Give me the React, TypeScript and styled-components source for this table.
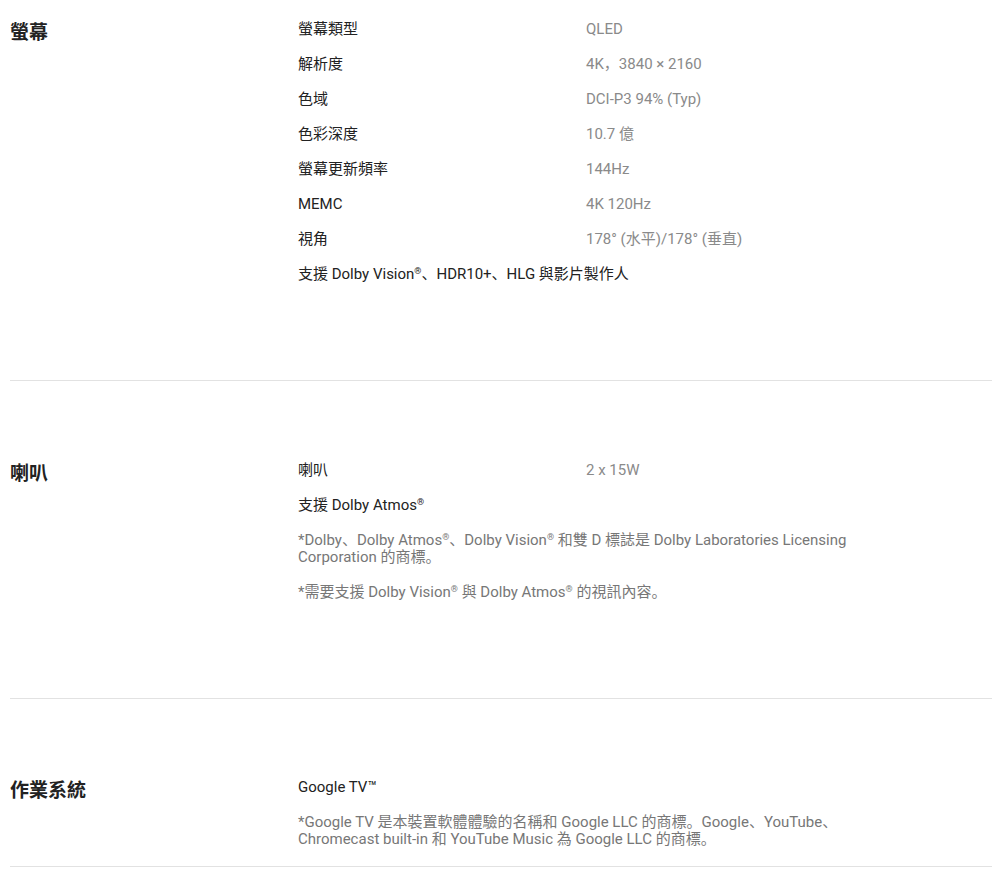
import styled, { createGlobalStyle } from "styled-components";
import { Fragment } from "react";

const Global = createGlobalStyle`
  body {
    margin: 0;
    background: #fff;
    font-family: Roboto, "Noto Sans CJK SC", sans-serif;
    color: #222;
  }
`;

const Page = styled.div`
  width: 982px;
  padding-left: 10px;
`;

const Section = styled.section<{ $top: number; $bottom: number }>`
  display: grid;
  grid-template-columns: 288px 1fr;
  padding: ${({ $top }) => $top}px 0 ${({ $bottom }) => $bottom}px;
  border-bottom: 1px solid #e2e2e2;
`;

const Title = styled.h2`
  margin: 0;
  font-size: 19px;
  font-weight: 700;
  line-height: 42px;
  color: #222;
`;

const Body = styled.div`
  display: flex;
  flex-direction: column;
`;

const Row = styled.div`
  display: flex;
  font-size: 15px;
  line-height: 35px;
`;

const Key = styled.div<{ $wide?: boolean }>`
  width: ${({ $wide }) => ($wide ? "auto" : "288px")};
  flex-shrink: 0;
  color: #222;
`;

const Value = styled.div`
  color: #8a8a8a;
`;

const Note = styled.p<{ $gap: number }>`
  margin: ${({ $gap }) => $gap}px 0 0;
  max-width: 600px;
  font-size: 15px;
  line-height: 17px;
  color: #777;
`;

const Sup = styled.sup`
  font-size: 0.6em;
  line-height: 0;
  vertical-align: 0.6em;
`;

// render ® as a small raised mark
function Marks({ text }: { text: string }) {
  const parts = text.split(/(®)/);
  return (
    <>
      {parts.map((p, i) =>
        p === "®" ? <Sup key={i}>{p}</Sup> : <Fragment key={i}>{p}</Fragment>
      )}
    </>
  );
}

type Spec = { k: string; v?: string };

const display: Spec[] = [
  { k: "螢幕類型", v: "QLED" },
  { k: "解析度", v: "4K，3840 × 2160" },
  { k: "色域", v: "DCI-P3 94% (Typ)" },
  { k: "色彩深度", v: "10.7 億" },
  { k: "螢幕更新頻率", v: "144Hz" },
  { k: "MEMC", v: "4K 120Hz" },
  { k: "視角", v: "178° (水平)/178° (垂直)" },
  { k: "支援 Dolby Vision®、HDR10+、HLG 與影片製作人" },
];

function Rows({ items }: { items: Spec[] }) {
  return (
    <>
      {items.map((s) => (
        <Row key={s.k}>
          <Key $wide={!s.v}>
            <Marks text={s.k} />
          </Key>
          {s.v && <Value>{s.v}</Value>}
        </Row>
      ))}
    </>
  );
}

export default function App() {
  return (
    <Page>
      <Global />
      <Section $top={12} $bottom={88}>
        <Title>螢幕</Title>
        <Body>
          <Rows items={display} />
        </Body>
      </Section>

      <Section $top={72} $bottom={97}>
        <Title>喇叭</Title>
        <Body>
          <Rows items={[{ k: "喇叭", v: "2 x 15W" }, { k: "支援 Dolby Atmos®" }]} />
          <Note $gap={9}>
            <Marks text="*Dolby、Dolby Atmos®、Dolby Vision® 和雙 D 標誌是 Dolby Laboratories Licensing" />
            <br />
            Corporation 的商標。
          </Note>
          <Note $gap={18}>
            <Marks text="*需要支援 Dolby Vision® 與 Dolby Atmos® 的視訊內容。" />
          </Note>
        </Body>
      </Section>

      <Section $top={71} $bottom={18}>
        <Title>作業系統</Title>
        <Body>
          <Rows items={[{ k: "Google TV™" }]} />
          <Note $gap={9}>
            *Google TV 是本裝置軟體體驗的名稱和 Google LLC 的商標。Google、YouTube、
            <br />
            Chromecast built-in 和 YouTube Music 為 Google LLC 的商標。
          </Note>
        </Body>
      </Section>
    </Page>
  );
}
